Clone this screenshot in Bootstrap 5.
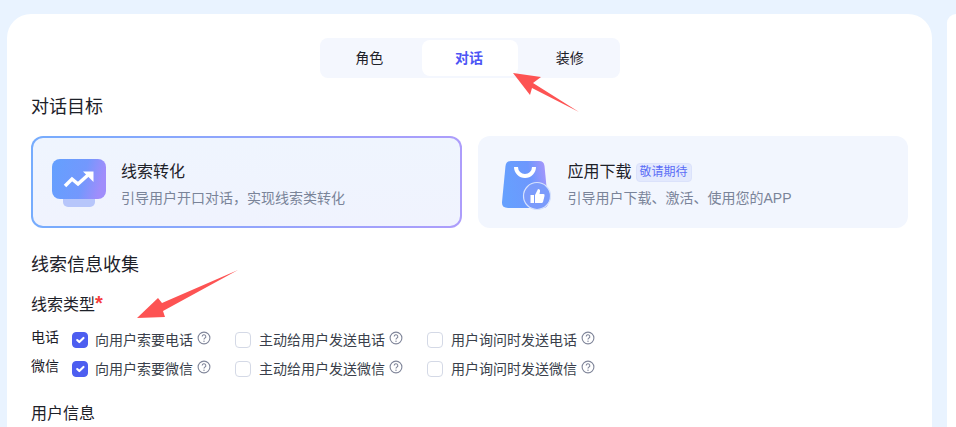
<!DOCTYPE html>
<html lang="zh-CN">
<head>
  <meta charset="UTF-8">
  <meta name="viewport" content="width=device-width, initial-scale=1">
  <title>对话目标</title>
  <link href="https://cdn.jsdelivr.net/npm/bootstrap@5.3.0/dist/css/bootstrap.min.css" rel="stylesheet">
  <style>
    html, body {
      height: 427px;
      overflow: hidden;
    }
    body {
      background: #e9f3ff;
      color: #1d2129;
      font-family: "Liberation Sans", "Noto Sans CJK SC", sans-serif;
      font-size: 14px;
      position: relative;
    }
    .page-wrap {
      display: flex;
      gap: 15px;
      padding: 14px 0 0 7px;
      height: 427px;
    }
    .main-panel {
      width: 925px;
      flex: none;
      height: 413px;
      overflow: hidden;
      background: #fff;
      border-radius: 24px 24px 0 0;
      padding: 24px 24px 0;
    }
    .side-panel {
      flex: 1;
      height: 413px;
      background: #fff;
      border-radius: 24px 0 0 0;
    }
    .tab-bar {
      width: 300px;
      height: 40px;
      margin: 0 auto;
      padding: 2px;
      background: #f4f7fe;
      border-radius: 8px;
      flex-wrap: nowrap;
    }
    .tab-bar .nav-link {
      flex: 1;
      height: 36px;
      padding: 0;
      line-height: 36px;
      text-align: center;
      font-size: 14px;
      color: #1d2129;
      border-radius: 8px;
    }
    .tab-bar .tab-left { padding-right: 5px; }
    .tab-bar .tab-right { padding-left: 4px; }
    .tab-bar .nav-link.active {
      flex: none;
      width: 96px;
      padding-right: 2px;
      background: #fff;
      color: #4d55f5;
      font-weight: 700;
    }
    .sec-title {
      font-size: 18px;
      line-height: 26px;
      font-weight: 400;
      margin: 0;
    }
    .goal-head { margin-top: 16px; }
    .goal-list {
      margin-top: 16px;
      gap: 16px;
    }
    .collect-head { margin-top: 24px; }
    .type-head { margin-top: 15px; }
    .user-head { margin-top: 19px; }
    .rows-wrap { margin-top: 8px; }
    .goal-card {
      flex: 1 1 0;
      min-width: 0;
      height: 92px;
      display: flex;
      align-items: center;
      gap: 12px;
      padding: 0 16px;
      border-radius: 12px;
      background: #f2f6fe;
      border: 2px solid transparent;
    }
    .goal-card.picked {
      background: linear-gradient(#eff5fe, #f0f3fe) padding-box, linear-gradient(90deg, #76acfd, #ad9dfb) border-box;
    }
    .goal-icon {
      width: 60px;
      height: 60px;
      flex: none;
    }
    .goal-text { padding-top: 4px; }
    .goal-name {
      font-size: 16px;
      line-height: 24px;
    }
    .goal-desc {
      color: #7a8499;
      line-height: 22px;
      margin-top: 3px;
    }
    .soon-tag {
      display: inline-block;
      width: 56px;
      height: 19px;
      margin-left: 4px;
      font-size: 12px;
      line-height: 17px;
      text-align: center;
      color: #5a6cf6;
      background: #e3e9fd;
      border: 1px solid #dbe2fb;
      border-radius: 4px;
      vertical-align: 1px;
    }
    .field-label {
      font-size: 16px;
      line-height: 24px;
    }
    .req-mark {
      color: #f53f3f;
      font-size: 20px;
      line-height: 16px;
      font-weight: 700;
    }
    .check-row {
      display: flex;
      align-items: center;
      height: 29px;
    }
    .row-name {
      width: 41px;
      flex: none;
      position: relative;
      top: -2px;
    }
    .opt-a { width: 163px; flex: none; }
    .opt-b { width: 192px; flex: none; }
    .opt-item {
      display: flex;
      align-items: center;
      color: #3a3f4b;
      font-size: 14px;
      line-height: 20px;
    }
    .opt-item .form-check-input {
      width: 16px;
      height: 16px;
      margin: 0 8px 0 0;
      border: 1px solid #d4d9e6;
      border-radius: 4px;
      flex: none;
    }
    .opt-item.opt-a .form-check-input { margin-right: 7px; }
    .opt-item .form-check-input:checked {
      background-color: #4d5ef0;
      border-color: #4d5ef0;
    }
    .help-mark {
      width: 14px;
      height: 14px;
      margin-left: 4px;
      position: relative;
      top: -2px;
    }
    .note-arrow {
      position: absolute;
      left: 0;
      top: 0;
      width: 956px;
      height: 427px;
      pointer-events: none;
    }
  </style>
</head>
<body>
  <div class="page-wrap">
    <div class="main-panel">
      <!-- Tabs -->
      <ul class="nav tab-bar">
        <li class="nav-item flex-fill d-flex"><a class="nav-link tab-left" href="#">角色</a></li>
        <li class="nav-item d-flex"><a class="nav-link active" href="#">对话</a></li>
        <li class="nav-item flex-fill d-flex"><a class="nav-link tab-right" href="#">装修</a></li>
      </ul>

      <h2 class="sec-title goal-head">对话目标</h2>
      <div class="d-flex goal-list">
        <div class="goal-card picked">
          <svg class="goal-icon" viewBox="0 0 60 60">
            <defs>
              <linearGradient id="screenFill" x1="0" y1="0" x2="1" y2="0.2">
                <stop offset="0" stop-color="#64a0fe"/>
                <stop offset="0.65" stop-color="#7398fd"/>
                <stop offset="1" stop-color="#a08dfb"/>
              </linearGradient>
              <linearGradient id="bagFill" x1="0" y1="0.4" x2="1" y2="0.2">
                <stop offset="0" stop-color="#66a0fe"/>
                <stop offset="0.6" stop-color="#6d97fd"/>
                <stop offset="1" stop-color="#ab96fb"/>
              </linearGradient>
            </defs>
            <rect x="14" y="40" width="32" height="15" rx="5" fill="#b7c6fb"/>
            <rect x="3" y="7" width="54" height="40" rx="8" fill="url(#screenFill)"/>
            <path d="M16 34l7-7 6 5 10-9" fill="none" stroke="#fff" stroke-width="3.500"/>
            <path d="M34 19.500h10.500V30z" fill="#fff"/>
          </svg>
          <div class="goal-text">
            <div class="goal-name">线索转化</div>
            <div class="goal-desc">引导用户开口对话，实现线索类转化</div>
          </div>
        </div>
        <div class="goal-card">
          <svg class="goal-icon" viewBox="0 0 60 60">
            <path d="M15 9h28q5 0 5.500 5l3.500 36q.5 6-5.500 6H12q-6.500 0-6-6l3.500-36Q10 9 15 9z" fill="url(#bagFill)"/>
            <path d="M20 15a9 9 0 0 0 18 0" fill="none" stroke="#fff" stroke-width="4"/>
            <circle cx="41" cy="44" r="13.500" fill="#7b9bfb" stroke="#d6e2fd" stroke-width="1.200"/>
            <rect x="34.500" y="43" width="3.500" height="8" fill="#fff"/>
            <path d="M39 43l3-6q2.500 0 2 2.500l-.5 2.500h4q1.500 0 1 2l-1.500 6q-.3 1-1.500 1H39z" fill="#fff"/>
          </svg>
          <div class="goal-text">
            <div class="goal-name">应用下载<span class="soon-tag">敬请期待</span></div>
            <div class="goal-desc">引导用户下载、激活、使用您的APP</div>
          </div>
        </div>
      </div>

      <h2 class="sec-title collect-head">线索信息收集</h2>
      <div class="field-label type-head">线索类型<span class="req-mark">*</span></div>

      <div class="rows-wrap">
        <div class="check-row">
          <span class="row-name">电话</span>
          <label class="opt-item opt-a"><input class="form-check-input" type="checkbox" checked>向用户索要电话<svg class="help-mark" viewBox="0 0 14 14"><use href="#helpIcon"/></svg></label>
          <label class="opt-item opt-b"><input class="form-check-input" type="checkbox">主动给用户发送电话<svg class="help-mark" viewBox="0 0 14 14"><use href="#helpIcon"/></svg></label>
          <label class="opt-item"><input class="form-check-input" type="checkbox">用户询问时发送电话<svg class="help-mark" viewBox="0 0 14 14"><use href="#helpIcon"/></svg></label>
        </div>
        <div class="check-row">
          <span class="row-name">微信</span>
          <label class="opt-item opt-a"><input class="form-check-input" type="checkbox" checked>向用户索要微信<svg class="help-mark" viewBox="0 0 14 14"><use href="#helpIcon"/></svg></label>
          <label class="opt-item opt-b"><input class="form-check-input" type="checkbox">主动给用户发送微信<svg class="help-mark" viewBox="0 0 14 14"><use href="#helpIcon"/></svg></label>
          <label class="opt-item"><input class="form-check-input" type="checkbox">用户询问时发送微信<svg class="help-mark" viewBox="0 0 14 14"><use href="#helpIcon"/></svg></label>
        </div>
      </div>

      <div class="field-label user-head">用户信息</div>
    </div>
    <div class="side-panel"></div>
  </div>

  <svg width="0" height="0" class="position-absolute">
    <symbol id="helpIcon" viewBox="0 0 14 14">
      <circle cx="7" cy="7" r="5.900" fill="none" stroke="#80869a" stroke-width="1.100"/>
      <path d="M5.200 5.600a1.800 1.800 0 1 1 2.700 1.500c-.6.400-.9.700-.9 1.400" fill="none" stroke="#80869a" stroke-width="1.100"/>
      <circle cx="7" cy="10.200" r=".7" fill="#80869a"/>
    </symbol>
  </svg>

  <!-- Red annotation arrows on top of the screenshot -->
  <svg class="note-arrow" viewBox="0 0 956 427">
    <path d="M513 73L541 77 533 83 579 112 532 88 530 95z" fill="#fd5353"/>
    <path d="M137 318L158 298 162 303 238 270 163 311 165 317z" fill="#fd5353"/>
  </svg>

  <script src="https://cdn.jsdelivr.net/npm/bootstrap@5.3.0/dist/js/bootstrap.bundle.min.js"></script>
</body>
</html>
